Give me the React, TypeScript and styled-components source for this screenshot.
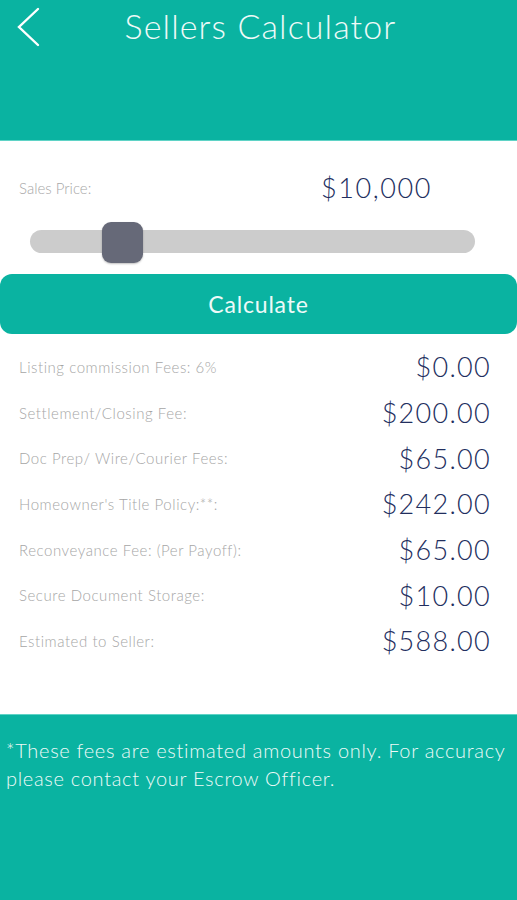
import React, { useState } from "react";
import styled, { createGlobalStyle } from "styled-components";

const TEAL = "#0ab3a1";
const NAVY = "#222e5e";

const GlobalStyle = createGlobalStyle`
  html, body {
    margin: 0;
    padding: 0;
    background: #fff;
    font-family: Lato, "Open Sans", sans-serif;
    font-weight: 300;
  }
`;

const fees = [
  { label: "Listing commission Fees: 6%", value: "$0.00" },
  { label: "Settlement/Closing Fee:", value: "$200.00" },
  { label: "Doc Prep/ Wire/Courier Fees:", value: "$65.00" },
  { label: "Homeowner's Title Policy:**:", value: "$242.00" },
  { label: "Reconveyance Fee: (Per Payoff):", value: "$65.00" },
  { label: "Secure Document Storage:", value: "$10.00" },
  { label: "Estimated to Seller:", value: "$588.00" },
];

const App: React.FC = () => {
  const [price] = useState(10000);
  const pct = 16.2;

  return (
    <Page>
      <GlobalStyle />
      <Header>
        <BackButton aria-label="back">
          <svg width="26" height="40" viewBox="0 0 26 40">
            <path d="M23 2 L4 20 L23 38" fill="none" stroke="#fff" strokeWidth="2.4" strokeLinecap="round" />
          </svg>
        </BackButton>
        <Title>Sellers Calculator</Title>
      </Header>

      <Body>
        <PriceRow>
          <PriceLabel>Sales Price:</PriceLabel>
          <PriceValue>${price.toLocaleString("en-US")}</PriceValue>
        </PriceRow>
        <Slider>
          <Track />
          <Thumb style={{ left: `${pct}%` }} />
        </Slider>
        <CalcButton>Calculate</CalcButton>
        <FeeList>
          {fees.map((f) => (
            <FeeRow key={f.label}>
              <FeeLabel>{f.label}</FeeLabel>
              <FeeValue>{f.value}</FeeValue>
            </FeeRow>
          ))}
        </FeeList>
      </Body>

      <Footer>
        *These fees are estimated amounts only. For accuracy please contact your Escrow Officer.
      </Footer>
    </Page>
  );
};

const Page = styled.div`
  width: 517px;
  height: 900px;
  display: flex;
  flex-direction: column;
  overflow: hidden;
`;

const Header = styled.header`
  height: 140px;
  background: ${TEAL};
  border-bottom: 1px solid #5fd3c6;
  position: relative;
  display: flex;
  justify-content: center;
`;

const BackButton = styled.button`
  position: absolute;
  left: 15px;
  top: 7px;
  background: none;
  border: none;
  padding: 0;
  cursor: pointer;
`;

const Title = styled.h1`
  margin: 4px 0 0 4px;
  font-weight: 300;
  font-size: 34px;
  color: #eefaf8;
  letter-spacing: 1.1px;
  line-height: 44px;
`;

const Body = styled.main`
  flex: 1;
  display: flex;
  flex-direction: column;
  padding-top: 30px;
`;

const PriceRow = styled.div`
  display: flex;
  align-items: center;
  padding: 0 19px;
`;

const PriceLabel = styled.span`
  font-size: 15px;
  color: #a8a8a8;
  width: 302px;
`;

const PriceValue = styled.span`
  font-size: 27px;
  color: ${NAVY};
  letter-spacing: 1.6px;
`;

const Slider = styled.div`
  position: relative;
  margin: 17px 42px 12px 30px;
  height: 41px;
  display: flex;
  align-items: center;
`;

const Track = styled.div`
  flex: 1;
  height: 23px;
  border-radius: 12px;
  background: #cccccc;
`;

const Thumb = styled.div`
  position: absolute;
  top: 1px;
  width: 41px;
  height: 41px;
  border-radius: 9px;
  background: #666978;
  box-shadow: 0 1px 2px rgba(0, 0, 0, 0.25);
`;

const CalcButton = styled.button`
  height: 60px;
  border: none;
  border-radius: 12px;
  background: ${TEAL};
  color: #eefaf8;
  font-family: Lato, sans-serif;
  font-weight: 400;
  font-size: 23px;
  letter-spacing: 0.8px;
  cursor: pointer;
`;

const FeeList = styled.div`
  display: flex;
  flex-direction: column;
  padding: 10px 26px 0 19px;
`;

const FeeRow = styled.div`
  height: 45.7px;
  display: flex;
  align-items: center;
  justify-content: space-between;
`;

const FeeLabel = styled.span`
  font-size: 15px;
  color: #a6a6a6;
  letter-spacing: 0.55px;
`;

const FeeValue = styled.span`
  font-size: 27px;
  color: ${NAVY};
  letter-spacing: 1.3px;
`;

const Footer = styled.footer`
  height: 186px;
  background: ${TEAL};
  border-top: 1px solid #5fd3c6;
  color: #eefaf8;
  font-size: 20px;
  line-height: 28px;
  letter-spacing: 0.7px;
  padding: 21px 6px 0;
  box-sizing: border-box;
`;

export default App;
